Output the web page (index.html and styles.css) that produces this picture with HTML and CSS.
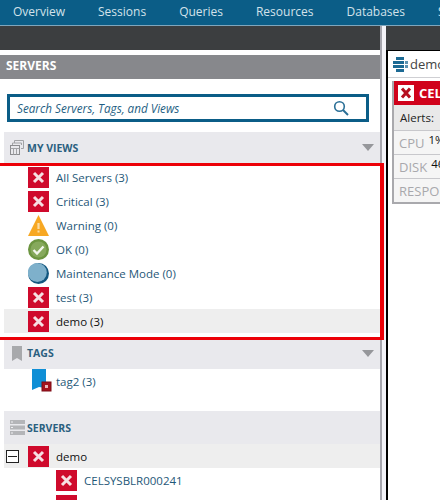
FILE: index.html
```html
<!DOCTYPE html>
<html>
<head>
	<meta charset="utf-8">
	<title>Servers</title>
	<link rel="stylesheet" href="styles.css">
</head>
<body>

<svg class="defs" width="0" height="0">
	<symbol id="x-icon" viewBox="0 0 21 21">
		<rect width="21" height="21" fill="#cf0a2c"/>
		<path d="M6 6l9 9M15 6l-9 9" stroke="#f6dfe2" stroke-width="3" fill="none"/>
	</symbol>
</svg>

<div class="nav">
	<a>Overview</a>
	<a>Sessions</a>
	<a>Queries</a>
	<a>Resources</a>
	<a>Databases</a>
	<a>Settings</a>
</div>

<div class="main">
	<div class="left">
		<div class="darkbar"></div>
		<div class="title">SERVERS</div>

		<div class="search-wrap">
			<div class="search">
				<span class="search-text">Search Servers, Tags, and Views</span>
				<svg class="search-icon" width="16" height="16" viewBox="0 0 16 16">
					<circle cx="6.500" cy="6.500" r="4.800" stroke="#2a6f96" stroke-width="1.600" fill="none"/>
					<path d="M10 10l5 5" stroke="#2a6f96" stroke-width="2" fill="none"/>
				</svg>
			</div>
		</div>

		<div class="sec-head views-head">
			<svg class="sec-icon" width="14" height="15" viewBox="0 0 14 15">
				<path d="M4.500 3V.5h9v8H11M2.500 5V3h9v2" stroke="#a2a3a6" fill="none"/>
				<rect x="0.500" y="5.500" width="9" height="9" stroke="#8c8d90" fill="#e9e9ed"/>
				<path d="M.5 8.500h9M3.500 8.500v6M6.500 8.500v6" stroke="#a2a3a6" fill="none"/>
			</svg>
			<span class="sec-name">MY VIEWS</span>
			<span class="caret"></span>
		</div>

		<ul class="views">
			<li class="row"><svg class="ic"><use href="#x-icon"/></svg>All Servers (3)</li>
			<li class="row"><svg class="ic"><use href="#x-icon"/></svg>Critical (3)</li>
			<li class="row">
				<svg class="ic" viewBox="0 0 21 21">
					<path d="M10.500 0L21 21H0z" fill="#f7a823"/>
					<path d="M10.500 8v6" stroke="#fbdca3" stroke-width="2.200"/>
					<rect x="9.500" y="15.500" width="2" height="2" fill="#fbdca3"/>
				</svg>Warning (0)
			</li>
			<li class="row">
				<svg class="ic" viewBox="0 0 21 21">
					<circle cx="10.500" cy="10.500" r="10.500" fill="#6c9540"/>
					<circle cx="10.500" cy="10.500" r="8" fill="#86a95c"/>
					<path d="M5.500 11l3.500 3.500 6.500-7" stroke="#f2f6ec" stroke-width="2.400" fill="none"/>
				</svg>OK (0)
			</li>
			<li class="row">
				<svg class="ic" viewBox="0 0 21 21">
					<circle cx="10.500" cy="10.500" r="10.500" fill="#12577f"/>
					<circle cx="9.300" cy="9.500" r="9.500" fill="#7eb0cb"/>
				</svg>Maintenance Mode (0)
			</li>
			<li class="row"><svg class="ic"><use href="#x-icon"/></svg>test (3)</li>
			<li class="row current"><svg class="ic"><use href="#x-icon"/></svg>demo (3)</li>
		</ul>

		<div class="sec-head tags-head">
			<svg class="sec-icon tag-gray" width="10" height="15" viewBox="0 0 10 15">
				<path d="M0 0h10v15L5 12 0 15z" fill="#a8a9ac"/>
			</svg>
			<span class="sec-name">TAGS</span>
			<span class="caret"></span>
		</div>

		<div class="row tag-row">
			<svg class="ic tag-ic" viewBox="0 0 21 24">
				<path d="M1 0h14v19l-7-1-7 3z" fill="#0f8fd6"/>
				<rect x="11" y="13" width="9" height="9" fill="#a5121f" stroke="#7d0c16"/>
				<rect x="14" y="16" width="3" height="3" fill="#e9b7bb"/>
			</svg>tag2 (3)
		</div>

		<div class="sec-head servers-head">
			<svg class="sec-icon" width="15" height="15" viewBox="0 0 15 15">
				<path d="M0 0h15v4H0zM0 5.500h15v4H0zM0 11h15v4H0z" fill="#b4b5b8"/>
				<path d="M1 2h2M1 7.500h2M1 13h2" stroke="#efeff2"/>
			</svg>
			<span class="sec-name">SERVERS</span>
		</div>

		<div class="row tree-top">
			<span class="toggle"></span>
			<svg class="ic"><use href="#x-icon"/></svg>demo
		</div>
		<div class="row child"><svg class="ic"><use href="#x-icon"/></svg>CELSYSBLR000241</div>
		<div class="row child"><svg class="ic"><use href="#x-icon"/></svg>CELSYSBLR0002 NL CELSYSBLTG 47</div>

		<div class="red-box"></div>
	</div>

	<div class="splitter"></div>

	<div class="right">
		<div class="darkbar"></div>
		<div class="pane">
			<div class="tab">
				<svg class="tab-icon" width="15" height="15" viewBox="0 0 15 15">
					<path d="M3 0h8v3H3zM0 4h11v3H0zM0 8h11v3H0zM3 12h8v3H3z" fill="#1c6a94"/>
					<path d="M12 4h3v3h-3zM12 8h3v3h-3z" fill="#5d93b2"/>
				</svg>
				<span>demo</span>
			</div>
			<div class="card">
				<div class="card-head">
					<span class="card-x">
						<svg width="16" height="16" viewBox="0 0 16 16">
							<path d="M4 3.500l8 9M12 3.500l-8 9" stroke="#b5101f" stroke-width="3" fill="none"/>
						</svg>
					</span>
					<span class="card-name">CELSYSBLR000241</span>
				</div>
				<div class="alerts">Alerts:</div>
				<div class="stat"><span class="stat-name">CPU</span><span class="stat-val">1%</span></div>
				<div class="stat"><span class="stat-name">DISK</span><span class="stat-val">46%</span></div>
				<div class="stat"><span class="stat-name">RESPONSE</span></div>
			</div>
		</div>
	</div>
</div>

</body>
</html>
```

FILE: styles.css
```css
*{
	margin: 0;
	padding: 0;
	list-style: none;
	box-sizing: border-box;
}

html, body{
	width: 440px;
	height: 500px;
	overflow: hidden;
}

body{
	background-color: #fff;
	font-family: "Open Sans", "Liberation Sans", sans-serif;
	font-size: 11.500px;
}

.defs{
	position: absolute;
}

/* top menu */
.nav{
	display: flex;
	gap: 33px;
	height: 26px;
	padding-left: 13px;
	line-height: 24px;
	background-color: #0b5d87;
	border-bottom: 1px solid #7fa6bd;
	color: #d3e2ea;
	font-size: 12px;
	white-space: nowrap;
}

.main{
	display: flex;
	height: 474px;
}

.left{
	position: relative;
	width: 380px;
	flex: none;
}

.darkbar{
	height: 24px;
	background-color: #3c3e40;
}

.title{
	height: 24px;
	margin-top: 5px;
	padding-left: 6px;
	line-height: 22px;
	background-color: #87888c;
	color: #fff;
	font-size: 12px;
	font-weight: bold;
}

.search-wrap{
	padding: 15px 11px 10px 7px;
}

.search{
	display: flex;
	align-items: center;
	justify-content: space-between;
	height: 28px;
	padding: 0 17px 0 7px;
	border: 3px solid #0b5d87;
}

.search-text{
	font-size: 11.700px;
	font-style: italic;
	color: #1f5f84;
}

/* section headers */
.sec-head{
	display: flex;
	align-items: center;
	gap: 3px;
	margin-left: 4px;
	padding: 0 6px;
	background-color: #e9e9ed;
}

.views-head{
	height: 31px;
}

.tags-head{
	height: 29px;
	padding-bottom: 3px;
}

.servers-head{
	height: 33px;
}

.sec-icon{
	flex: none;
}

.tag-gray{
	margin: 0 2px 0 2px;
}

.sec-name{
	font-size: 10.500px;
	font-weight: bold;
	color: #2b6080;
}

.servers-head .sec-name{
	margin-left: -1px;
}

.caret{
	margin-left: auto;
	border-top: 7px solid #96979b;
	border-left: 6px solid transparent;
	border-right: 6px solid transparent;
}

/* rows */
.views{
	padding: 2px 0 7px;
}

.row{
	display: flex;
	align-items: center;
	gap: 7px;
	height: 24px;
	margin-left: 4px;
	padding-left: 24px;
	color: #1f5878;
	white-space: nowrap;
}

.ic{
	width: 21px;
	height: 21px;
	flex: none;
}

.current{
	background-color: #eeeeee;
	color: #111;
}

.tag-row{
	margin-bottom: 18px;
	padding-left: 27px;
	gap: 4px;
}

.tag-ic{
	height: 24px;
}

.tree-top{
	padding-left: 2px;
	gap: 7px;
	background-color: #eeeeee;
	color: #111;
}

.toggle{
	position: relative;
	width: 13px;
	height: 13px;
	margin-right: 2px;
	border: 1px solid #222;
	background-color: #fff;
}

.toggle:after{
	content: "";
	position: absolute;
	left: 1px;
	right: 1px;
	top: 5px;
	height: 1px;
	background-color: #222;
}

.child{
	margin-bottom: 1px;
	padding-left: 52px;
}

/* highlight drawn over the list */
.red-box{
	position: absolute;
	left: 0;
	top: 137px;
	width: 384px;
	height: 177px;
	border: 3px solid #ec0008;
	border-right-width: 4px;
	border-left: 0;
	z-index: 2;
}

.splitter{
	width: 6px;
	flex: none;
	background-color: #f3f3f8;
	border-left: 2px solid #a6a6ae;
}

.right{
	flex: 1;
	min-width: 0;
	overflow: hidden;
}

.pane{
	height: 450px;
	border-top: 1px solid #000;
	border-left: 2px solid #000;
	background-color: #fff;
}

.tab{
	display: flex;
	align-items: center;
	gap: 2px;
	height: 27px;
	padding-left: 5px;
	border-bottom: 1px solid #cfcfd3;
	font-size: 13px;
	color: #444;
	white-space: nowrap;
}

.tab-icon{
	flex: none;
}

.card{
	width: 160px;
	margin: 3px 0 0 4px;
	border-left: 2px solid #a9a9ad;
	border-bottom: 2px solid #a9a9ad;
	white-space: nowrap;
}

.card-head{
	display: flex;
	align-items: center;
	gap: 5px;
	height: 24px;
	padding-left: 4px;
	background-color: #d0021b;
}

.card-x{
	display: flex;
	width: 16px;
	height: 16px;
	background-color: #fff;
}

.card-name{
	font-size: 13px;
	font-weight: bold;
	color: #fff;
}

.alerts{
	height: 25px;
	padding-left: 6px;
	line-height: 25px;
	background-color: #e9e9e9;
	color: #222;
}

.stat{
	display: flex;
	height: 24px;
	padding-left: 5px;
	border-top: 1px solid #c8c8cc;
	background-color: #f5f5f5;
}

.stat-name{
	font-size: 13px;
	line-height: 24px;
	color: #a8a8ac;
}

.stat-val{
	margin-left: 4px;
	line-height: 18px;
	color: #111;
}
```
